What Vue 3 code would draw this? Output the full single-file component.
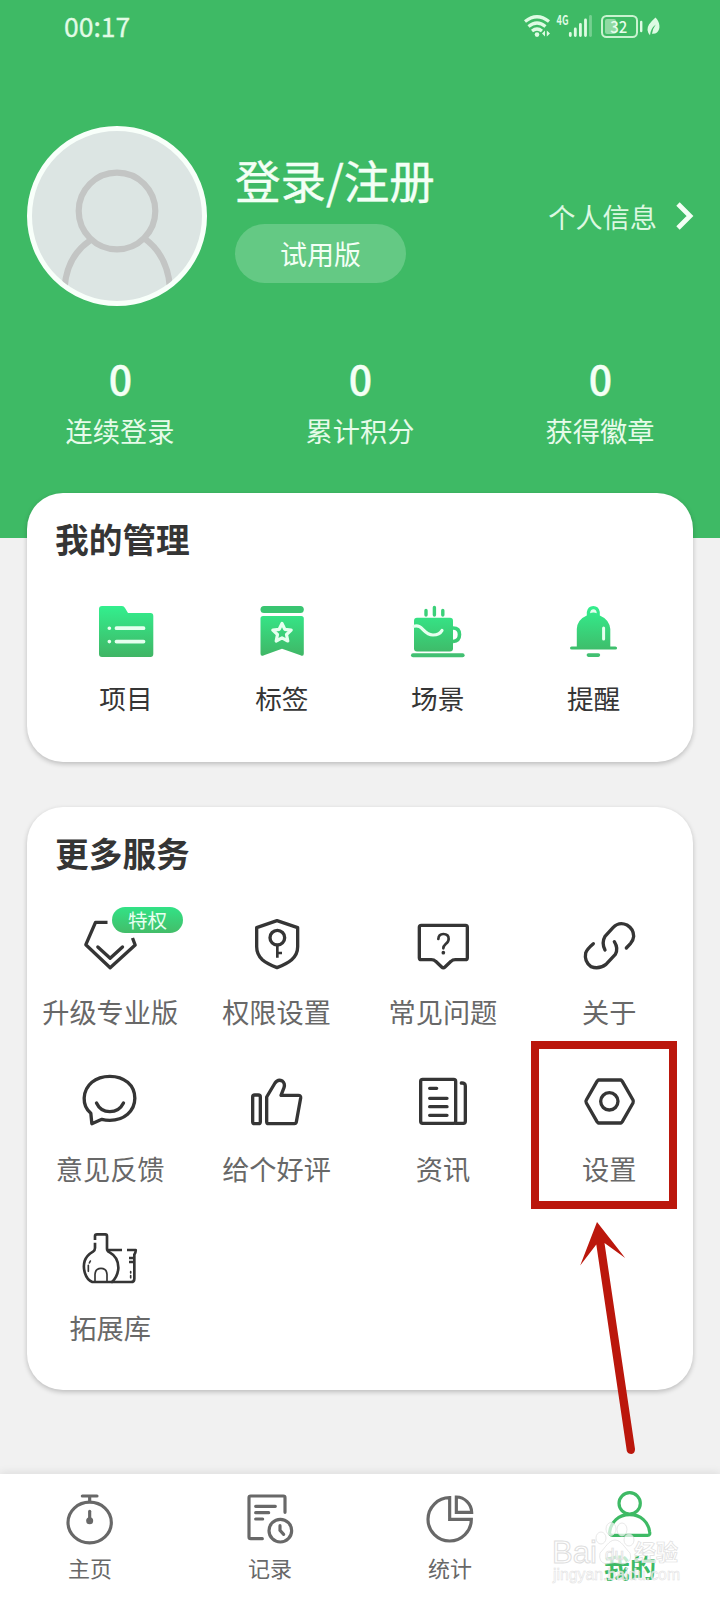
<script setup>
const stats = [
  { value: '0', label: '连续登录' },
  { value: '0', label: '累计积分' },
  { value: '0', label: '获得徽章' },
]
const manage = [
  { icon: 'folder', label: '项目' },
  { icon: 'tag', label: '标签' },
  { icon: 'cup', label: '场景' },
  { icon: 'bell', label: '提醒' },
]
const services = [
  { icon: 'diamond', label: '升级专业版', badge: '特权' },
  { icon: 'shield', label: '权限设置' },
  { icon: 'question', label: '常见问题' },
  { icon: 'link', label: '关于' },
  { icon: 'chat', label: '意见反馈' },
  { icon: 'thumb', label: '给个好评' },
  { icon: 'news', label: '资讯' },
  { icon: 'nut', label: '设置', marked: true },
  { icon: 'flask', label: '拓展库' },
]
const tabs = [
  { icon: 'timer', label: '主页' },
  { icon: 'record', label: '记录' },
  { icon: 'pie', label: '统计' },
  { icon: 'me', label: '我的', active: true },
]
</script>

<template>
  <div class="page">
    <header class="header">
      <div class="status">
        <span class="time">00:17</span>
        <svg class="status-icons" width="140" height="40" viewBox="522 7 140 40">
          <g fill="none" stroke="#defbe3" stroke-width="3.2">
            <path d="M525 21.5Q537 12 549 21.5" />
            <path d="M528.5 26.5Q537 19.5 545.5 26.5" />
            <path d="M532 31Q537 27 542 31" />
          </g>
          <circle cx="537" cy="34.6" r="2.3" fill="#defbe3" />
          <path d="M545 30.5v6l-3-3zM546.8 30.5v6l3.2-3z" fill="#defbe3" />
          <text x="556.5" y="25" class="net" textLength="12" lengthAdjust="spacingAndGlyphs">4G</text>
          <g stroke="#defbe3" stroke-width="2.8" stroke-linecap="round">
            <path d="M570.3 33.5V35.5M575.3 29V35.5M580.4 24.5V35.5M585.5 20V35.5" />
            <path d="M590.5 16.5V35.5" opacity=".35" />
          </g>
          <rect x="602" y="16" width="35" height="21" rx="4.5" fill="none" stroke="#c9f3d0" stroke-width="2" />
          <rect x="605" y="19" width="11" height="15" rx="2" fill="#8fdaa3" />
          <text x="610.3" y="32.5" class="battery" textLength="17" lengthAdjust="spacingAndGlyphs">32</text>
          <path d="M641.2 22V31" stroke="#defbe3" stroke-width="2.4" stroke-linecap="round" />
          <path d="M655.5 17.5C660 22 661 29 657 32.5Q655.5 34 652 33.8Q653 28 655.8 24.5Q650.5 28.5 650 35.3Q645.5 30 649 24.5Q651.5 21 655.5 17.5Z" fill="#defbe3" />
        </svg>
      </div>
      <div class="profile">
        <div class="avatar">
          <svg width="170" height="170" viewBox="32 131 170 170">
            <g fill="none" stroke="#c3c5c4" stroke-width="6.2">
              <circle cx="117" cy="211" r="38.300" />
              <path d="M64.500 288C66 266 76 250 90 240.500M170 288C168.500 266 159 249 144.500 238.500" />
            </g>
          </svg>
        </div>
        <div class="who">
          <div class="login">登录/注册</div>
          <div class="edition">试用版</div>
        </div>
        <div class="info">
          <span>个人信息</span>
          <svg width="18" height="30" viewBox="0 0 18 30"><path d="M2 3L14 15L2 27" fill="none" stroke="#f3fff5" stroke-width="4.8" /></svg>
        </div>
      </div>
      <div class="stats">
        <div v-for="s in stats" :key="s.label" class="stat">
          <div class="num">{{ s.value }}</div>
          <div class="cap">{{ s.label }}</div>
        </div>
      </div>
    </header>

    <section class="card manage">
      <h2>我的管理</h2>
      <div class="manage-grid">
        <div v-for="m in manage" :key="m.label" class="entry">
          <svg width="60" height="60" viewBox="0 0 60 60">
            <defs>
              <linearGradient id="green" gradientUnits="userSpaceOnUse" x1="0" y1="6" x2="0" y2="56">
                <stop offset="0" stop-color="#33ee8d" />
                <stop offset="1" stop-color="#40b565" />
              </linearGradient>
            </defs>
            <template v-if="m.icon === 'folder'">
              <path d="M6 5H26Q28 5 29 7L32 12H54.5Q57.300 12 57.300 15V53Q57.300 56 54.500 56H6Q3 56 3 53V8Q3 5 6 5Z" fill="url(#green)" />
              <path d="M20.500 27.200H47.500M20.500 40.600H47.500" stroke="#e6ffef" stroke-width="3.800" stroke-linecap="round" />
              <path d="M13.300 27.200h.1M13.300 40.600h.1" stroke="#e6ffef" stroke-width="3.600" stroke-linecap="round" />
            </template>
            <template v-if="m.icon === 'tag'">
              <rect x="8.500" y="5" width="43.300" height="7" rx="3.500" fill="#39c571" />
              <path d="M11 15H49.300Q51.800 15 51.800 17.500V52.500Q51.800 56 48.500 54.300L30 47.800L12 54.300Q8.500 56 8.500 52.500V17.500Q8.500 15 11 15Z" fill="url(#green)" />
              <path d="M30 22.500L32.800 28.300L39.200 29.100L34.500 33.500L35.800 40L30 36.900L24.200 40L25.500 33.500L20.800 29.100L27.200 28.300Z" fill="none" stroke="#e6ffef" stroke-width="3.200" stroke-linejoin="round" />
            </template>
            <template v-if="m.icon === 'cup'">
              <path d="M18 9.500V14M26.400 6.500V14M34.800 9.500V14" stroke="#3bd079" stroke-width="3.400" stroke-linecap="round" />
              <rect x="6" y="16.800" width="39" height="33.800" rx="3" fill="url(#green)" />
              <path d="M45 27Q51.500 27 51.500 33.500T45 40.500" fill="none" stroke="url(#green)" stroke-width="3.600" />
              <path d="M6 25.200C15 23 15 34 25 34Q31.500 34 34 29.500" fill="none" stroke="#e6ffef" stroke-width="3.200" stroke-linecap="round" />
              <rect x="3" y="52.300" width="53.600" height="4" rx="2" fill="#42c072" />
            </template>
            <template v-if="m.icon === 'bell'">
              <g transform="translate(-.7 0)">
                <path d="M13.500 45.500V28Q14 18.500 23.500 14.500V11Q24.500 5 30 5T36.500 11V14.500Q46 18.500 47 28V45.500H52Q53.800 45.500 53.800 47T52 48.600H8.500Q6.700 48.600 6.700 47T8.500 45.500Z" fill="url(#green)" />
                <path d="M26.800 12.200Q27 8.200 30.100 8.200T33.500 12.200Q30 11 26.800 12.200Z" fill="#e6ffef" />
                <path d="M40.300 27V38" stroke="#e6ffef" stroke-width="3" stroke-linecap="round" />
                <rect x="23.300" y="52.300" width="13.600" height="3.600" rx="1.800" fill="#42c072" />
              </g>
            </template>
          </svg>
          <span>{{ m.label }}</span>
        </div>
      </div>
    </section>

    <section class="card services">
      <h2>更多服务</h2>
      <div class="service-grid">
        <div v-for="s in services" :key="s.label" class="service">
          <svg v-if="s.icon === 'diamond'" width="60" height="60" viewBox="181.500 345 180 180">
            <path d="M264 367H228L199 434L272 503L347 435L339 414" />
            <path d="M235 441L272 475L309 441" stroke-linecap="round" />
          </svg>
          <svg v-if="s.icon === 'shield'" width="60" height="60" viewBox="680 345 180 180">
            <path d="M770 362L832 383V440Q832 463 814 479Q800 491 770 503Q740 491 726 479Q709 463 709 440V383Z" />
            <circle cx="771" cy="413" r="22" />
            <path d="M771 435V473M771 459H785" class="thin" />
          </svg>
          <svg v-if="s.icon === 'question'" width="60" height="60" viewBox="159 45 180 180">
            <path d="M184 76H317Q322 76 322 82V173Q322 179 316 179H286Q278 179 273 184L255 201Q250 206 245 201L227 184Q222 179 214 179H184Q178 179 178 173V82Q178 76 184 76Z" />
            <path d="M235 117Q236 102 250 102Q266 102 266 117Q266 125 257 132Q250 138 250 145" class="thin" stroke-linecap="round" />
            <circle cx="250" cy="158" r="5.500" class="solid" />
          </svg>
          <svg v-if="s.icon === 'link'" width="60" height="60" viewBox="657 45 180 180">
            <path d="M735 150Q724 128 735 109L759 83Q777 64 801 75Q821 87 821 109Q820 120 812 130L799 144" stroke-linecap="round" />
            <path d="M763 125Q776 146 766 163L738 193Q717 209 693 200Q672 184 677 159Q680 148 700 131" stroke-linecap="round" />
          </svg>
          <svg v-if="s.icon === 'chat'" width="60" height="60" viewBox="182.500 90 180 180">
            <path d="M215 220Q194 202 195 174C197 135 229 109 272 109C315 109 347 135 347 175C347 214 314 241 272 241Q259 241 248 238L218 251Z" />
            <path d="M232 189Q244 215 272 215T313 189" stroke-linecap="round" />
          </svg>
          <svg v-if="s.icon === 'thumb'" width="60" height="60" viewBox="681 90 180 180">
            <rect x="698" y="165" width="23" height="86" rx="6" />
            <path d="M740 171L765 129Q774 116 787 123Q796 130 792 143L783 166H835Q843 166 842 174L829 246Q828 251 823 251H746Q740 251 740 245Z" />
          </svg>
          <svg v-if="s.icon === 'news'" width="60" height="60" viewBox="159 120 180 180">
            <rect x="182" y="148" width="105" height="132" rx="6" />
            <path d="M287 280H310Q316 280 316 274V168Q316 158 304 159M209 175H230M209 205H261M209 230H261M209 256H261" stroke-linecap="round" />
          </svg>
          <svg v-if="s.icon === 'nut'" width="60" height="60" viewBox="657 120 180 180">
            <path d="M715 150H783L787 154L819 210Q821 214 819 219L787 275L783 279H715L711 275L679 219Q676 214 679 210L711 154Z" />
            <circle cx="748" cy="214" r="26" />
          </svg>
          <svg v-if="s.icon === 'flask'" width="60" height="60" viewBox="183 55 180 180">
            <path d="M228 88V76Q228 71 234 71H259Q264 71 264 77V114Q264 121 272 125Q299 140 298 173Q296 198 279 214H220C197 205 191 171 197 151Q203 134 222 123Q228 119 228 112V96" class="thin" />
            <path d="M266 118H309M324 118H350Q352 120 346 132V204Q346 214 336 214H277M346 142H330M346 154H330" class="thin" />
            <path d="M228 214V191Q229 173 246 173T264 191V214" class="hair" />
            <path d="M214 151L211 157M208 164V182M335 183V187M335 195V201" class="hair" stroke-linecap="round" />
          </svg>
          <span>{{ s.label }}</span>
          <em v-if="s.badge" class="badge">{{ s.badge }}</em>
          <i v-if="s.marked" class="mark"></i>
        </div>
      </div>
    </section>

    <nav class="tabs">
      <div v-for="t in tabs" :key="t.label" class="tab" :class="{ active: t.active }">
        <svg v-if="t.icon === 'timer'" width="60" height="60" viewBox="180 75 180 180">
          <ellipse cx="269" cy="187.500" rx="65" ry="61" />
          <path d="M247 108H291M269 110V124" stroke-linecap="round" />
          <path d="M269 154V180" stroke-linecap="round" />
          <circle cx="269" cy="182" r="10.500" class="solid" />
        </svg>
        <svg v-if="t.icon === 'record'" width="60" height="60" viewBox="720 75 180 180">
          <path d="M787 236H752Q747 236 747 231V113Q747 108 752 108H850Q855 108 855 113V157M767 139H826M767 158H806M767 177H788" stroke-linecap="round" />
          <circle cx="841" cy="212" r="34" />
          <path d="M840 197V211L851 223" stroke-linecap="round" />
        </svg>
        <svg v-if="t.icon === 'pie'" width="60" height="60" viewBox="180 195 180 180">
          <path d="M269 233A65 65 0 1 0 334 298H269Z" />
          <path d="M289 231A47 47 0 0 1 335 277H289Z" />
        </svg>
        <svg v-if="t.icon === 'me'" width="60" height="60" viewBox="721 195 180 180">
          <circle cx="810" cy="250" r="32" />
          <path d="M759 346H864Q872 346 870 336C866 306 844 284 810 284S754 306 750 336Q749 346 759 346Z" />
        </svg>
        <span>{{ t.label }}</span>
      </div>
    </nav>

    <svg class="arrow" width="70" height="240" viewBox="570 1215 70 240">
      <path d="M597 1222L625.200 1258L604.500 1243L635 1449Q635 1453.500 631.500 1454Q627.800 1454 626.800 1451L596.300 1244.500L580.200 1265.500Z" />
    </svg>
    <svg class="watermark" width="146" height="76" viewBox="545 1512 146 76">
      <g class="paws">
        <ellipse cx="611" cy="1529" rx="5" ry="6.500" /><ellipse cx="622" cy="1529.500" rx="5" ry="6.500" />
        <ellipse cx="601" cy="1538" rx="5" ry="6" /><ellipse cx="629" cy="1540" rx="5" ry="6" />
        <path d="M615 1540C621 1540 625 1548 630 1553Q633 1562 623 1564Q615 1561 606 1564Q598 1562 600 1553C605 1548 609 1540 615 1540Z" />
      </g>
      <text x="552" y="1562.500" class="wm-big" textLength="45" lengthAdjust="spacingAndGlyphs">Bai</text>
      <text x="605" y="1560" class="wm-du">du</text>
      <text x="634" y="1560" class="wm-cn">经验</text>
      <text x="553" y="1579.500" class="wm-url" textLength="127" lengthAdjust="spacingAndGlyphs">jingyan.baidu.com</text>
    </svg>
  </div>
</template>

<style>
body { background: #f1f1f1; }
</style>

<style scoped>
.page {
  position: relative;
  width: 720px;
  height: 1600px;
  overflow: hidden;
  display: flex;
  flex-direction: column;
  background: #f1f1f1;
  font-family: "Noto Sans CJK SC", "Noto Sans", sans-serif;
  color: #353535;
}
.page svg { display: block; flex: none; }
.header {
  flex: none;
  height: 538px;
  box-sizing: border-box;
  background: #3eba65;
  color: #f3fff5;
}
.status {
  height: 54px;
  padding: 0 58px 0 64px;
  display: flex;
  align-items: center;
  justify-content: space-between;
}
.time { font-size: 26.500px; line-height: 52px; height: 54px; color: #e2fbe6; -webkit-text-stroke: .3px #e2fbe6; }
.net { font-size: 13px; font-weight: 700; fill: #defbe3; }
.battery { font-size: 16px; font-weight: 500; fill: #e8fdeb; }
.profile {
  height: 180px;
  margin-top: 72px;
  padding: 0 26px 0 27px;
  display: flex;
  align-items: center;
}
.avatar {
  width: 180px;
  height: 180px;
  box-sizing: border-box;
  border: 5px solid #f8fffa;
  border-radius: 50%;
  background: #dce5e3;
  overflow: hidden;
  flex: none;
}
.who { margin-left: 28px; height: 180px; }
.login { margin-top: 23px; font-size: 45.500px; line-height: 60px; height: 60px; white-space: nowrap; -webkit-text-stroke: .4px #f3fff5; }
.edition {
  width: 171px;
  height: 59px;
  margin-top: 15px;
  border-radius: 30px;
  background: #64c984;
  font-size: 27px;
  line-height: 60px;
  text-align: center;
}
.info { margin-left: auto; display: flex; align-items: center; gap: 19px; font-size: 27.200px; color: #dcf8e1; }
.info svg { position: relative; left: -.5px; }
.stats { display: flex; margin-top: 43px; }
.stat { flex: 1; text-align: center; }
.num { font-size: 41px; font-weight: 500; line-height: 56px; text-indent: 1px; -webkit-text-stroke: .4px #f3fff5; }
.cap { font-size: 27.200px; line-height: 40px; margin-top: 5px; color: #e6fbe9; }
.card {
  position: relative;
  flex: none;
  box-sizing: border-box;
  margin: 0 27.500px 0 27px;
  border-radius: 36px;
  background: #fff;
  box-shadow: 0 2px 5px rgba(0, 0, 0, .22);
}
.manage { height: 269px; margin-top: -45px; }
.services { height: 583px; margin-top: 45px; }
h2 { margin: 0; padding: 21.500px 0 0 28px; font-size: 33.700px; line-height: 48px; font-weight: 700; }
.manage-grid { display: flex; padding: 38.500px 21px 0 21px; }
.entry { flex: 1; display: flex; flex-direction: column; align-items: center; }
.entry span { font-size: 26.700px; line-height: 40px; margin-top: 17px; }
.service-grid { display: grid; grid-template-columns: repeat(4, 1fr); grid-template-rows: 155px 159px 130px; padding-top: 38.500px; }
.service { position: relative; display: flex; flex-direction: column; align-items: center; }
.service span { font-size: 27.200px; line-height: 40px; margin-top: 16px; color: #686868; white-space: nowrap; }
.service:nth-child(n + 5) span { margin-top: 17.500px; }
.service svg { fill: none; stroke: #353535; stroke-width: 10px; stroke-linejoin: round; color: #353535; }
.service svg .thin { stroke-width: 8px; }
.service svg .hair { stroke-width: 5px; }
.service svg .solid, .tab svg .solid { fill: currentColor; stroke: none; }
.badge {
  position: absolute;
  left: 85px;
  top: -8px;
  width: 71px;
  height: 26px;
  border-radius: 13px;
  background: linear-gradient(#32e286, #43bd69);
  color: #e8fff0;
  font-size: 19.500px;
  font-style: normal;
  line-height: 26px;
  text-align: center;
}
.mark {
  position: absolute;
  left: 4.500px;
  top: -29.500px;
  width: 146px;
  height: 168px;
  box-sizing: border-box;
  border: 8px solid #bb170c;
}
.tabs {
  flex: none;
  height: 126px;
  margin-top: auto;
  display: flex;
  background: #fff;
  box-shadow: 0 -2px 8px rgba(0, 0, 0, .08);
}
.tab { flex: 1; display: flex; flex-direction: column; align-items: center; padding-top: 11px; color: #686868; }
.tab svg { fill: none; stroke: currentColor; stroke-width: 9.500px; }
.tab span { font-size: 22px; line-height: 32px; margin-top: 6px; }
.active { color: #3eba65; }
.active span { font-size: 26px; font-weight: 700; }
.arrow { position: absolute; left: 570px; top: 1215px; fill: #bb170c; }
.watermark {
  position: absolute;
  left: 545px;
  top: 1512px;
  fill: rgba(255, 255, 255, .7);
  stroke: #dedede;
  stroke-width: .7px;
}
.wm-big { font: 400 31px "Liberation Sans", sans-serif; stroke-width: 1px; }
.wm-du { font: 400 17px "Liberation Sans", sans-serif; }
.wm-cn { font-size: 22px; font-weight: 700; }
.wm-url { font: 16px "Liberation Sans", sans-serif; stroke-width: .5px; }
</style>
